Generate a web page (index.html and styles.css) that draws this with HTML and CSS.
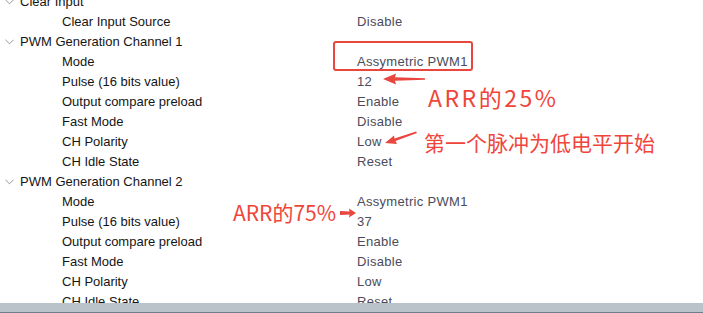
FILE: index.html
```html
<!DOCTYPE html>
<html>
<head>
<meta charset="utf-8">
<link rel="stylesheet" href="styles.css">
</head>
<body>
<div class="view">
  <div class="tree">
    <div class="row cat"><svg class="chev" viewBox="0 0 10 6"><polyline points="0.5,0.5 5,5 9.5,0.5"/></svg><span class="name">Clear Input</span><span class="val"></span></div>
    <div class="row"><span class="name sub">Clear Input Source</span><span class="val">Disable</span></div>
    <div class="row cat"><svg class="chev" viewBox="0 0 10 6"><polyline points="0.5,0.5 5,5 9.5,0.5"/></svg><span class="name">PWM Generation Channel 1</span><span class="val"></span></div>
    <div class="row"><span class="name sub">Mode</span><span class="val">Assymetric PWM1</span></div>
    <div class="row"><span class="name sub">Pulse (16 bits value)</span><span class="val">12</span></div>
    <div class="row"><span class="name sub">Output compare preload</span><span class="val">Enable</span></div>
    <div class="row"><span class="name sub">Fast Mode</span><span class="val">Disable</span></div>
    <div class="row"><span class="name sub">CH Polarity</span><span class="val">Low</span></div>
    <div class="row"><span class="name sub">CH Idle State</span><span class="val">Reset</span></div>
    <div class="row cat"><svg class="chev" viewBox="0 0 10 6"><polyline points="0.5,0.5 5,5 9.5,0.5"/></svg><span class="name">PWM Generation Channel 2</span><span class="val"></span></div>
    <div class="row"><span class="name sub">Mode</span><span class="val">Assymetric PWM1</span></div>
    <div class="row"><span class="name sub">Pulse (16 bits value)</span><span class="val">37</span></div>
    <div class="row"><span class="name sub">Output compare preload</span><span class="val">Enable</span></div>
    <div class="row"><span class="name sub">Fast Mode</span><span class="val">Disable</span></div>
    <div class="row"><span class="name sub">CH Polarity</span><span class="val">Low</span></div>
    <div class="row"><span class="name sub">CH Idle State</span><span class="val">Reset</span></div>
  </div>
  <div class="scrollbar"></div>

  <div class="box"></div>
  <svg class="arrow a1" viewBox="0 0 42 12"><path d="M0,6 L13,0.5 L12,4.2 L42,5.2 L42,6.8 L12,7.8 L13,11.5 Z"/></svg>
  <div class="note n1">ARR的25%</div>
  <svg class="arrow a2" viewBox="0 0 32 14"><path d="M0,12 L9,4.5 L9.5,7.5 L31,0.5 L32,2 L10.5,10 L12,13 Z"/></svg>
  <div class="note n2">第一个脉冲为低电平开始</div>
  <div class="note n3">ARR的75%</div>
  <svg class="arrow a3" viewBox="0 0 16 10"><path d="M16,5 L9,0.5 L9.5,3.5 L0,3 L0,7 L9.5,6.5 L9,9.5 Z"/></svg>
</div>
</body>
</html>
```

FILE: styles.css
```css
html, body {
  margin: 0;
  padding: 0;
  background: #ffffff;
}
.view {
  position: relative;
  width: 703px;
  height: 313px;
  overflow: hidden;
  font-family: "Liberation Sans", Arial, sans-serif;
  font-size: 13px;
}
.tree {
  display: flex;
  flex-direction: column;
  margin-top: -9px;
  height: 313px;
}
.row {
  display: grid;
  grid-template-columns: 357px 1fr;
  height: 20px;
  align-items: center;
  flex: none;
  position: relative;
}
.row .name {
  color: #151515;
  white-space: nowrap;
}
.row .name.sub {
  padding-left: 62px;
}
.row.cat .name {
  padding-left: 20px;
}
.chev {
  position: absolute;
  left: 5px;
  top: 8px;
  width: 9px;
  height: 6px;
  fill: none;
  stroke: #8a8a8a;
  stroke-width: 1;
}
.val {
  color: #4b4b59;
  white-space: nowrap;
  letter-spacing: 0.3px;
}
.scrollbar {
  position: absolute;
  left: 0;
  right: 0;
  bottom: 0;
  height: 9px;
  background: #b9c3c9;
  border-bottom: 1px solid #6f7e88;
}
.box {
  position: absolute;
  left: 333px;
  top: 41px;
  width: 136px;
  height: 26px;
  border: 2px solid #e8463e;
  border-radius: 3px;
}
.arrow {
  position: absolute;
  fill: #e8463e;
}
.a1 { left: 383px; top: 73px; width: 42px; height: 12px; }
.a2 { left: 385px; top: 131px; width: 32px; height: 14px; }
.a3 { left: 340px; top: 208px; width: 16px; height: 10px; }
.note {
  position: absolute;
  color: #f0453a;
  font-family: "Noto Sans CJK SC", "Liberation Sans", sans-serif;
  white-space: nowrap;
  line-height: 1;
}
.n1 { left: 428px; top: 86px; font-size: 23px; letter-spacing: 2.5px; }
.n2 { left: 424px; top: 132px; font-size: 21px; }
.n3 { left: 233px; top: 202px; font-size: 21px; }
```
